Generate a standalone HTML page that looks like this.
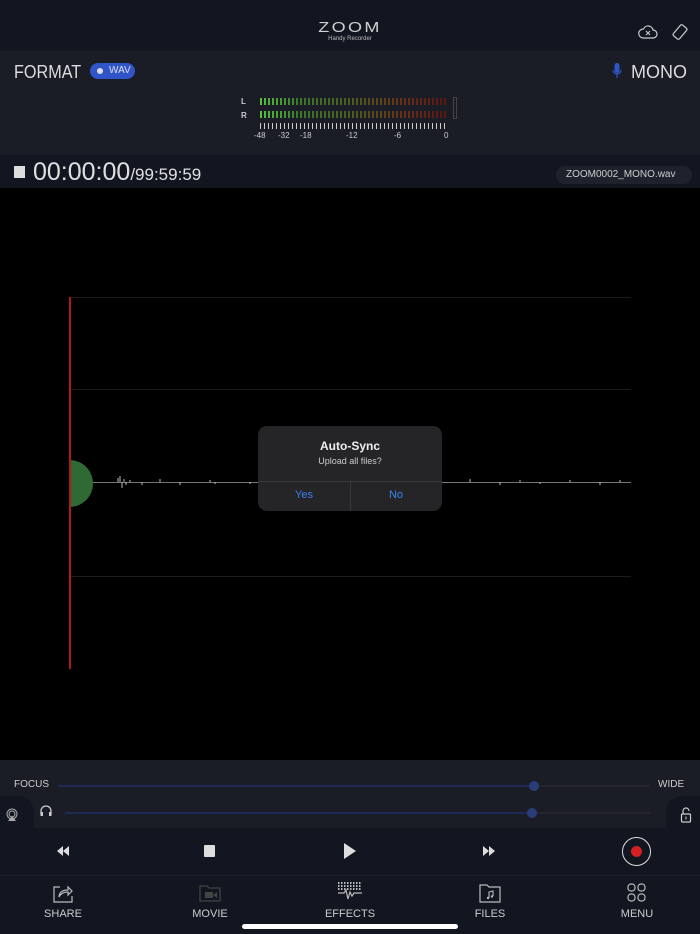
<!DOCTYPE html>
<html><head><meta charset="utf-8"><style>
*{margin:0;padding:0;box-sizing:border-box}
body{width:700px;height:934px;background:#000;font-family:"Liberation Sans",sans-serif;color:#ddd;position:relative;overflow:hidden}
.abs{position:absolute}
</style></head><body>
<div class="abs" style="left:0;top:0;width:700px;height:51px;background:#121620"></div>
<div class="abs" style="left:0;top:19px;width:700px;text-align:center;font-size:15px;letter-spacing:2px;color:#cfcfcf;transform:scaleX(1.2)">ZOOM</div>
<div class="abs" style="left:0;top:36px;width:700px;text-align:center;font-size:6px;color:#bbb">Handy Recorder</div>
<svg class="abs" style="left:638px;top:24px" width="20" height="16" viewBox="0 0 20 16"><path d="M5 14h10a4 4 0 0 0 0-8 5 5 0 0 0-9.5-1A4.5 4.5 0 0 0 5 14z" fill="none" stroke="#ccc" stroke-width="1.2"/><path d="M8 7l4 4M12 7l-4 4" stroke="#ccc" stroke-width="1.1"/></svg>
<svg class="abs" style="left:672px;top:24px" width="16" height="16" viewBox="0 0 16 16"><rect x="4" y="1" width="8" height="14" rx="1.5" transform="rotate(40 8 8)" fill="none" stroke="#ccc" stroke-width="1.2"/></svg>
<div class="abs" style="left:0;top:51px;width:700px;height:104px;background:#1a1d26"></div>
<div class="abs" style="left:14px;top:62px;font-size:18px;color:#ddd;transform:scaleX(0.9);transform-origin:left">FORMAT</div>
<div class="abs" style="left:90px;top:63px;width:45px;height:16px;border-radius:8px;background:#2f55c8;font-size:10px;color:#dde;line-height:16px;padding-left:19px">WAV</div>
<div class="abs" style="left:97px;top:68px;width:6px;height:6px;border-radius:3px;background:#dde"></div>
<svg class="abs" style="left:612px;top:63px" width="10" height="16" viewBox="0 0 10 16"><rect x="2.5" y="0" width="5" height="10" rx="2.5" fill="#2f55c8"/><path d="M1 7a4 4 0 0 0 8 0M5 11v4" stroke="#2f55c8" stroke-width="1.2" fill="none"/></svg>
<div class="abs" style="left:631px;top:62px;font-size:18px;color:#ddd">MONO</div>
<div class="abs" style="left:241px;top:97px;font-size:8px;color:#ccc;font-weight:bold">L</div>
<div class="abs" style="left:241px;top:111px;font-size:8px;color:#ccc;font-weight:bold">R</div>
<div class="abs" style="left:260px;top:98px;width:188px;height:7px;background:linear-gradient(90deg,#5ac040 0,#3a7a2a 20%,#4d5a1c 50%,#6a3018 75%,#5a1512 100%)"></div>
<div class="abs" style="left:260px;top:98px;width:188px;height:7px;background:repeating-linear-gradient(90deg,transparent 0 2px,#1a1d26 2px 4px)"></div>
<div class="abs" style="left:260px;top:111px;width:188px;height:7px;background:linear-gradient(90deg,#5ac040 0,#3a7a2a 20%,#4d5a1c 50%,#6a3018 75%,#5a1512 100%)"></div>
<div class="abs" style="left:260px;top:111px;width:188px;height:7px;background:repeating-linear-gradient(90deg,transparent 0 2px,#1a1d26 2px 4px)"></div>
<div class="abs" style="left:453px;top:97px;width:4px;height:22px;border:1px solid #444"></div>
<div class="abs" style="left:260px;top:123px;width:188px;height:6px;background:repeating-linear-gradient(90deg,#ccc 0 1px,transparent 1px 4px)"></div>
<div class="abs" style="left:252px;top:131px;width:210px;height:10px;font-size:8px;color:#ccc">
<span class="abs" style="left:2px">-48</span><span class="abs" style="left:26px">-32</span><span class="abs" style="left:48px">-18</span><span class="abs" style="left:94px">-12</span><span class="abs" style="left:142px">-6</span><span class="abs" style="left:192px">0</span></div>
<div class="abs" style="left:0;top:155px;width:700px;height:33px;background:#121620"></div>
<div class="abs" style="left:14px;top:166px;width:11px;height:12px;background:#ddd"></div>
<div class="abs" style="left:33px;top:158px;font-size:25px;color:#e0e0e0">00:00:00<span style="font-size:17px">/99:59:59</span></div>
<div class="abs" style="left:556px;top:166px;width:136px;height:18px;border-radius:9px;background:#1e222c;font-size:10px;color:#ccc;line-height:18px;padding-left:10px">ZOOM0002_MONO.wav</div>
<div class="abs" style="left:70px;top:297px;width:561px;height:1px;background:#1c1c1c"></div>
<div class="abs" style="left:70px;top:389px;width:561px;height:1px;background:#1c1c1c"></div>
<div class="abs" style="left:70px;top:576px;width:561px;height:1px;background:#1c1c1c"></div>
<div class="abs" style="left:70px;top:482px;width:561px;height:1px;background:#777"></div>
<svg class="abs" style="left:70px;top:474px" width="561" height="16"><path d="M48 8V4M50 8V2M52 8V14M54 8V5M56 8V11M60 8V6M72 8V11M90 8V5M110 8V11M140 8V6M145 8V10M180 8V10M400 8V5M430 8V11M450 8V6M470 8V10M500 8V6M530 8V11M550 8V6" stroke="#bbb" stroke-width="1"/></svg>
<div class="abs" style="left:46px;top:460px;width:47px;height:47px;border-radius:50%;background:#2f6a35;clip-path:inset(0 0 0 24px)"></div>
<div class="abs" style="left:69px;top:297px;width:2px;height:372px;background:#b01a1a"></div>
<div class="abs" style="left:258px;top:426px;width:184px;height:85px;border-radius:9px;background:#252528"></div>
<div class="abs" style="left:258px;top:439px;width:184px;text-align:center;font-size:12px;font-weight:bold;color:#eee">Auto-Sync</div>
<div class="abs" style="left:258px;top:456px;width:184px;text-align:center;font-size:9px;color:#ccc">Upload all files?</div>
<div class="abs" style="left:258px;top:481px;width:184px;height:1px;background:#3a3a3c"></div>
<div class="abs" style="left:350px;top:481px;width:1px;height:30px;background:#3a3a3c"></div>
<div class="abs" style="left:258px;top:489px;width:92px;text-align:center;font-size:11px;color:#3a82f0">Yes</div>
<div class="abs" style="left:350px;top:489px;width:92px;text-align:center;font-size:11px;color:#3a82f0">No</div>
<div class="abs" style="left:0;top:760px;width:700px;height:68px;background:#1a1d26"></div>
<div class="abs" style="left:0;top:796px;width:34px;height:32px;background:#121620;border-top-right-radius:16px"></div>
<div class="abs" style="left:666px;top:796px;width:34px;height:32px;background:#121620;border-top-left-radius:16px"></div>
<div class="abs" style="left:14px;top:779px;font-size:10px;color:#ccc">FOCUS</div>
<div class="abs" style="left:658px;top:779px;font-size:10px;color:#ccc">WIDE</div>
<div class="abs" style="left:58px;top:785px;width:476px;height:2px;background:#1f2a55"></div>
<div class="abs" style="left:534px;top:785px;width:116px;height:2px;background:#25262c"></div>
<div class="abs" style="left:529px;top:781px;width:10px;height:10px;border-radius:5px;background:#2a3d78"></div>
<div class="abs" style="left:65px;top:812px;width:467px;height:2px;background:#1f2a55"></div>
<div class="abs" style="left:532px;top:812px;width:118px;height:2px;background:#25262c"></div>
<div class="abs" style="left:527px;top:808px;width:10px;height:10px;border-radius:5px;background:#2a3d78"></div>
<svg class="abs" style="left:39px;top:804px" width="14" height="14" viewBox="0 0 14 14"><path d="M2 10V7a5 5 0 0 1 10 0v3" fill="none" stroke="#ccc" stroke-width="1.3"/><rect x="1.5" y="8" width="2.5" height="4" fill="#ccc"/><rect x="10" y="8" width="2.5" height="4" fill="#ccc"/></svg>
<svg class="abs" style="left:5px;top:808px" width="14" height="14" viewBox="0 0 14 14"><circle cx="7" cy="6" r="5" fill="none" stroke="#aaa"/><circle cx="7" cy="6" r="3" fill="none" stroke="#aaa"/><path d="M3 13l4-5 4 5z" fill="#aaa"/></svg>
<svg class="abs" style="left:680px;top:807px" width="12" height="16" viewBox="0 0 12 16"><path d="M3 7V4a3 3 0 0 1 6 0" fill="none" stroke="#ccc" stroke-width="1.2"/><rect x="1.5" y="7" width="9" height="8" rx="1" fill="none" stroke="#ccc" stroke-width="1.2"/><rect x="5.5" y="9.5" width="1" height="3" fill="#ccc"/></svg>
<div class="abs" style="left:0;top:828px;width:700px;height:106px;background:#121620"></div>
<div class="abs" style="left:0;top:875px;width:700px;height:1px;background:#1a1e28"></div>
<svg class="abs" style="left:56px;top:845px" width="14" height="12" viewBox="0 0 14 12"><path d="M7 1L1 6l6 5zM13 1L7 6l6 5z" fill="#ddd"/></svg>
<div class="abs" style="left:204px;top:845px;width:11px;height:12px;background:#ddd;border-radius:1px"></div>
<svg class="abs" style="left:343px;top:843px" width="13" height="16" viewBox="0 0 13 16"><path d="M1 0l12 8-12 8z" fill="#ddd"/></svg>
<svg class="abs" style="left:482px;top:845px" width="14" height="12" viewBox="0 0 14 12"><path d="M1 1l6 5-6 5zM7 1l6 5-6 5z" fill="#ddd"/></svg>
<div class="abs" style="left:622px;top:837px;width:29px;height:29px;border-radius:50%;border:1.5px solid #ddd"></div>
<div class="abs" style="left:631px;top:846px;width:11px;height:11px;border-radius:50%;background:#d42020"></div>
<svg class="abs" style="left:53px;top:883px" width="20" height="20" viewBox="0 0 20 20"><path d="M7 4H1v15h18v-6" fill="none" stroke="#bbb" stroke-width="1.2"/><path d="M6 14c0-5 4-7 9-7V4l4 4-4 4V9c-4 0-7 1-9 5z" fill="none" stroke="#bbb" stroke-width="1.2"/></svg>
<svg class="abs" style="left:199px;top:884px" width="22" height="18" viewBox="0 0 22 18"><path d="M1 2h7l2 2h11v13H1z" fill="none" stroke="#444" stroke-width="1.2"/><rect x="6" y="8" width="8" height="6" fill="#444"/><path d="M14 11l4-3v6z" fill="#444"/></svg>
<svg class="abs" style="left:337px;top:882px" width="26" height="18" viewBox="0 0 26 18"><path d="M1 1h24M1 4h24M1 7h24" stroke="#bbb" stroke-width="2" stroke-dasharray="1.5 1.5"/><path d="M1 11h6l2-3 2 9 2-7 2 4 2-3h8" fill="none" stroke="#bbb" stroke-width="1.2"/></svg>
<svg class="abs" style="left:479px;top:883px" width="22" height="20" viewBox="0 0 22 20"><path d="M1 2h7l2 2h11v15H1z" fill="none" stroke="#bbb" stroke-width="1.2"/><path d="M10 15V9l4-1v5" fill="none" stroke="#bbb" stroke-width="1.1"/><circle cx="9" cy="15" r="1.2" fill="#bbb"/><circle cx="13" cy="13.5" r="1.2" fill="#bbb"/></svg>
<svg class="abs" style="left:627px;top:883px" width="20" height="20" viewBox="0 0 20 20"><rect x="1" y="1" width="7" height="7" rx="3" fill="none" stroke="#bbb" stroke-width="1.2"/><rect x="11" y="1" width="7" height="7" rx="3" fill="none" stroke="#bbb" stroke-width="1.2"/><rect x="1" y="11" width="7" height="7" rx="3" fill="none" stroke="#bbb" stroke-width="1.2"/><rect x="11" y="11" width="7" height="7" rx="3" fill="none" stroke="#bbb" stroke-width="1.2"/></svg>
<div class="abs" style="left:23px;top:908px;width:80px;text-align:center;font-size:11px;color:#ccc">SHARE</div>
<div class="abs" style="left:170px;top:908px;width:80px;text-align:center;font-size:11px;color:#ccc">MOVIE</div>
<div class="abs" style="left:310px;top:908px;width:80px;text-align:center;font-size:11px;color:#ccc">EFFECTS</div>
<div class="abs" style="left:450px;top:908px;width:80px;text-align:center;font-size:11px;color:#ccc">FILES</div>
<div class="abs" style="left:597px;top:908px;width:80px;text-align:center;font-size:11px;color:#ccc">MENU</div>
<div class="abs" style="left:242px;top:924px;width:216px;height:5px;border-radius:3px;background:#fff"></div>
</body></html>
